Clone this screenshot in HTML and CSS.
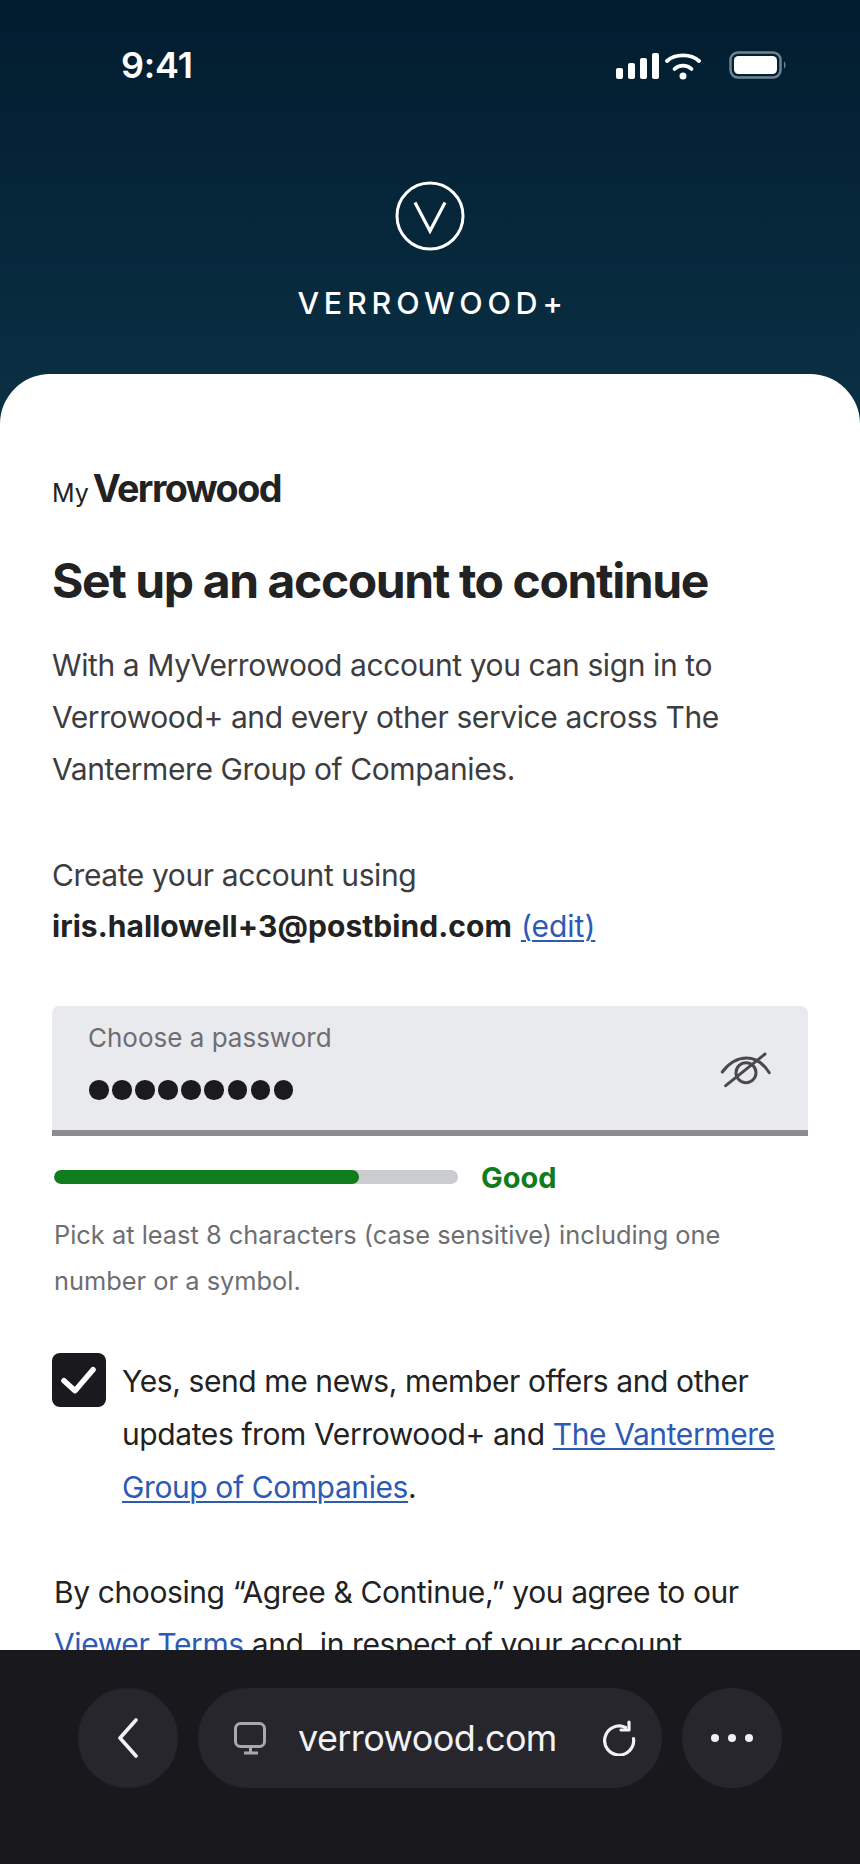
FILE: index.html
```html
<!DOCTYPE html>
<html lang="en">
<head>
<meta charset="utf-8">
<title>Verrowood+</title>
<link rel="stylesheet" href="styles.css">
</head>
<body>
<div class="phone">
  <header class="hero">
    <div class="status">
      <span class="time">9:41</span>
      <div class="status-icons">
        <svg class="signal" width="43" height="26" viewBox="0 0 43 26" fill="#fff"><rect x="0" y="15" width="7" height="11" rx="2"/><rect x="12" y="10" width="7" height="16" rx="2"/><rect x="24" y="5" width="7" height="21" rx="2"/><rect x="36" y="0" width="7" height="26" rx="2"/></svg>
        <svg class="wifi" width="36" height="28" viewBox="0 0 36 28" fill="none" stroke="#fff" stroke-width="3.800" stroke-linecap="round"><path d="M2 9C10 1.500 26 1.500 34 9"/><path d="M9.500 17C14 12.500 22 12.500 26.500 17"/><circle cx="18" cy="24" r="3.500" fill="#fff" stroke="none"/></svg>
        <svg class="battery" width="58" height="28" viewBox="0 0 58 28"><rect x="1.500" y="1.500" width="50" height="25" rx="7.500" fill="none" stroke="#6e8493" stroke-width="2.500"/><rect x="5" y="5" width="43" height="18" rx="4.500" fill="#fff"/><path d="M55 10.500C57 11.500 57 16.500 55 17.500Z" fill="#6e8493"/></svg>
      </div>
    </div>
    <svg class="logo-mark" width="70" height="70" viewBox="0 0 70 70" fill="none" stroke="#fff" stroke-width="3"><circle cx="35" cy="35" r="33"/><path d="M20 21.500L35 50L50 21.500" stroke-width="3.200"/></svg>
    <div class="brand">VERROWOOD+</div>
  </header>

  <main class="sheet">
    <div class="my-logo"><span class="my">My</span><span class="my-name">Verrowood</span></div>
    <h1 class="title">Set up an account to continue</h1>
    <p class="intro">With a MyVerrowood account you can sign in to Verrowood+ and every other service across The Vantermere Group of Companies.</p>
    <p class="using">Create your account using<br><strong class="email">iris.hallowell+3@postbind.com</strong> <a class="link edit" href="#">(edit)</a></p>

    <div class="field">
      <div class="field-body">
        <div class="field-label">Choose a password</div>
        <div class="dots"><i></i><i></i><i></i><i></i><i></i><i></i><i></i><i></i><i></i></div>
      </div>
      <svg class="eye" width="52" height="36" viewBox="0 0 52 36" fill="none" stroke="#4a4a4e" stroke-width="3" stroke-linecap="round"><path d="M2.300 20C9 11 17 6 26.700 6C35 6 43 11 49.300 20.700"/><circle cx="26" cy="20.700" r="10"/><path d="M5.700 33.700L45 2"/></svg>
    </div>

    <div class="strength">
      <div class="track"><div class="fill" style="width:75.500%"></div></div>
      <span class="strength-label">Good</span>
    </div>
    <p class="hint">Pick at least 8 characters (case sensitive) including one number or a symbol.</p>

    <div class="consent">
      <div class="checkbox"><svg width="36" height="30" viewBox="0 0 36 30" fill="none" stroke="#fff" stroke-width="5.500" stroke-linecap="round" stroke-linejoin="round"><path d="M3 15.700L14 25.700L32 4.700"/></svg></div>
      <p class="consent-text">Yes, send me news, member offers and other updates from Verrowood+ and <a class="link" href="#">The Vantermere Group of Companies</a>.</p>
    </div>

    <p class="legal">By choosing “Agree &amp; Continue,” you agree to our <a class="link" href="#">Viewer Terms</a> and, in respect of your account</p>
  </main>

  <nav class="toolbar">
    <button class="round-btn" type="button" aria-label="Back">
      <svg width="22" height="40" viewBox="0 0 22 40" fill="none" stroke="#f2f2f4" stroke-width="3.600" stroke-linecap="round" stroke-linejoin="round"><path d="M19 2L3 20L19 38"/></svg>
    </button>
    <div class="url-pill">
      <svg class="monitor" width="34" height="34" viewBox="12 11 34 34" fill="none" stroke="#a9a9ad" stroke-width="3"><rect x="14.500" y="13.500" width="29" height="23" rx="5"/><path d="M29.500 37V43M23 43H37"/></svg>
      <span class="url">verrowood.com</span>
      <svg class="reload" width="34" height="36" viewBox="13 10 34 36" fill="none" stroke="#f2f2f4" stroke-width="3.200" stroke-linecap="round" stroke-linejoin="round"><path d="M35.500 17.500A14.500 14.500 0 1 0 43.500 28.500"/><path d="M39 12V20H31"/></svg>
    </div>
    <button class="round-btn" type="button" aria-label="More">
      <span class="more"><i></i><i></i><i></i></span>
    </button>
  </nav>
</div>
</body>
</html>
```
FILE: styles.css
```css
* { box-sizing: border-box; }
html, body { margin: 0; padding: 0; background: #18181d; }
body { font-family: Inter, "Liberation Sans", sans-serif; }

.phone {
  width: 860px;
  height: 1864px;
  display: flex;
  flex-direction: column;
  overflow: hidden;
  position: relative;
  background: linear-gradient(180deg, #021c2f 0, #0a3044 420px);
}

.hero {
  height: 374px;
  flex: none;
  display: flex;
  flex-direction: column;
  align-items: center;
}
.status {
  width: 100%;
  height: 182px;
  padding: 49px 73px 0 121px;
  display: flex;
  justify-content: space-between;
  align-items: flex-start;
  color: #fff;
}
.time { font-size: 36px; line-height: 32px; font-weight: 600; letter-spacing: -0.2px; }
.status-icons { display: flex; align-items: flex-start; }
.signal { margin-top: 4px; }
.wifi { margin: 3px 0 0 6px; }
.battery { margin: 2px 0 0 28px; }
.logo-mark { flex: none; margin-top: -1px; }
.brand {
  margin-top: 40px;
  font-size: 30.500px;
  line-height: 24px;
  font-weight: 500;
  letter-spacing: 4.800px;
  color: #fff;
  padding-left: 5px;
}

.sheet {
  flex: 1;
  min-height: 0;
  overflow: hidden;
  background: #fff;
  border-radius: 50px 50px 0 0;
  padding: 96px 52px 0;
}
.my-logo { display: flex; align-items: baseline; color: #222; height: 36px; line-height: 36px; }
.my { font-size: 25px; font-weight: 400; margin-right: 4px; }
.my-name { font-size: 37.700px; font-weight: 700; letter-spacing: -1.600px; }

.title {
  margin: 47px 0 0;
  font-size: 48px;
  line-height: 56px;
  font-weight: 700;
  letter-spacing: -1.400px;
  color: #222;
}
.intro {
  margin: 30px 0 0;
  font-size: 30px;
  line-height: 52px;
  letter-spacing: -0.400px;
  color: #3d3d3f;
}
.using {
  margin: 55px 0 0;
  font-size: 30px;
  line-height: 51px;
  letter-spacing: -0.400px;
  color: #3d3d3f;
}
.email { font-weight: 700; color: #222; letter-spacing: 0.050px; }
.link { color: #2d5ab4; text-decoration: underline; text-underline-offset: 3px; text-decoration-thickness: 1.500px; }
.edit { letter-spacing: 0; margin-left: 1px; }

.field {
  margin: 54px 0 0;
  width: 756px;
  height: 130px;
  background: #e9eaee;
  border-radius: 7px 7px 0 0;
  border-bottom: 6px solid #8c8c8f;
  padding: 0 36px 0 36px;
  display: flex;
  justify-content: space-between;
  align-items: center;
}
.field-body { padding-bottom: 14px; }
.field-label { font-size: 26px; line-height: 32px; color: #6e6e72; }
.dots { display: flex; gap: 3.600px; margin: 26px 0 0 1px; }
.dots i { width: 19.500px; height: 19.500px; border-radius: 50%; background: #1b1b1f; }
.eye { margin-top: 4px; }

.strength { display: flex; align-items: center; margin: 19px 0 0 2px; height: 44px; }
.track { width: 404px; height: 14px; border-radius: 7px; background: #cbccd0; overflow: hidden; }
.fill { height: 100%; border-radius: 7px; background: #107c1e; }
.strength-label { margin-left: 23px; font-size: 29px; font-weight: 700; color: #107c1e; }

.hint {
  margin: 13px 0 0 2px;
  max-width: 690px;
  font-size: 25.400px;
  line-height: 46px;
  color: #6e6e72;
}

.consent { display: flex; align-items: flex-start; margin-top: 49px; }
.checkbox {
  flex: none;
  width: 54px;
  height: 54px;
  border-radius: 8px;
  background: #1a1a1e;
  display: flex;
  align-items: center;
  justify-content: center;
}
.consent-text {
  margin: 2px 0 0 16px;
  font-size: 30px;
  line-height: 53px;
  letter-spacing: -0.400px;
  color: #222;
}
.legal {
  margin: 52px 0 0 2px;
  font-size: 30px;
  line-height: 52px;
  letter-spacing: -0.400px;
  color: #222;
}

.toolbar {
  flex: none;
  height: 214px;
  background: #18181d;
  padding: 38px 78px 0;
  display: flex;
  align-items: flex-start;
  gap: 20px;
}
.round-btn {
  flex: none;
  width: 100px;
  height: 100px;
  border: 0;
  padding: 0;
  border-radius: 50%;
  background: #26262c;
  display: flex;
  align-items: center;
  justify-content: center;
}
.url-pill {
  flex: 1;
  height: 100px;
  border-radius: 50px;
  background: #26262c;
  display: flex;
  align-items: center;
  padding: 0 25px 0 35px;
}
.url { flex: 1; margin-left: 31px; font-size: 36px; letter-spacing: -0.600px; color: #f2f2f4; }
.more { display: flex; gap: 9px; }
.more i { width: 8px; height: 8px; border-radius: 50%; background: #f2f2f4; }
```
